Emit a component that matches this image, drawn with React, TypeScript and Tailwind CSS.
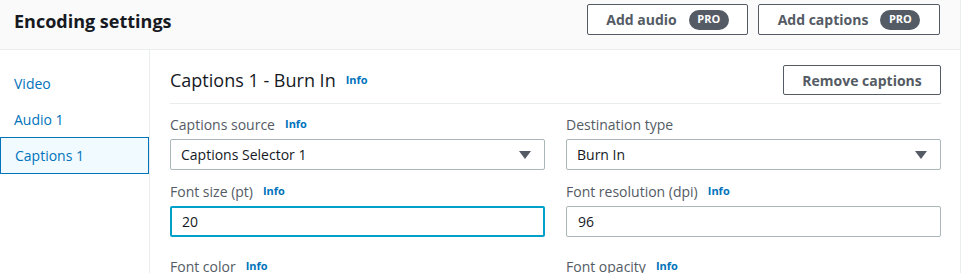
import React from 'react';

const font = { fontFamily: '"Open Sans", "Noto Sans", sans-serif' };

function Info() {
  return <span className="ml-[10px] text-[11px] font-bold text-[#0073bb]">Info</span>;
}

function ProButton({ label, width }: { label: string; width: string }) {
  return (
    <button
      className={`flex h-[31px] ${width} items-center justify-center gap-3 rounded-[2px] border border-[#545b64] bg-white text-[14px] font-bold text-[#545b64]`}
    >
      <span>{label}</span>
      <span className="flex h-5 w-10 items-center justify-center rounded-full bg-[#545b64] text-[11px] font-bold text-white">
        PRO
      </span>
    </button>
  );
}

function Field({
  label,
  info = true,
  children,
}: {
  label: string;
  info?: boolean;
  children?: React.ReactNode;
}) {
  return (
    <div className="flex flex-1 flex-col">
      <div className="flex h-[24px] items-center text-[14px] text-[#545b64]">
        <span>{label}</span>
        {info && <Info />}
      </div>
      {children}
    </div>
  );
}

function Select({ value }: { value: string }) {
  return (
    <div className="mt-[3px] flex h-[31px] items-center justify-between rounded-[2px] border border-[#aab7b8] bg-white pl-[10px] pr-[13px] text-[14px] text-[#16191f]">
      <span>{value}</span>
      <svg width="12" height="8" viewBox="0 0 12 8">
        <path d="M0 0h12L6 8z" fill="#545b64" />
      </svg>
    </div>
  );
}

function Input({ value, focused }: { value: string; focused?: boolean }) {
  return (
    <div
      className={`mt-[3px] flex h-[31px] items-center rounded-[2px] bg-white text-[14px] text-[#16191f] ${
        focused ? 'border-2 border-[#00a1c9] pl-[10px]' : 'border border-[#aab7b8] pl-[11px]'
      }`}
    >
      {value}
    </div>
  );
}

export default function App() {
  return (
    <div className="h-[273px] w-[961px] overflow-hidden border-r border-[#eaeded] bg-white" style={font}>
      <header className="flex h-[50px] items-start justify-between border-b border-[#eaeded] bg-[#fafafa] pl-[14px] pr-[20px]">
        <h1 className="mt-[8px] text-[18px] font-bold text-[#16191f]">Encoding settings</h1>
        <div className="mt-[4px] flex gap-[10px]">
          <ProButton label="Add audio" width="w-[161px]" />
          <ProButton label="Add captions" width="w-[182px]" />
        </div>
      </header>
      <div className="flex">
        <nav className="w-[150px] shrink-0 border-r border-[#eaeded] pt-[15px] text-[14px] text-[#0073bb]">
          <div className="flex h-[36px] items-center pl-[14px]">Video</div>
          <div className="flex h-[36px] items-center pl-[14px]">Audio 1</div>
          <div className="flex h-[37px] w-[149px] items-center border border-[#0073bb] bg-[#f1faff] pl-[14px]">
            Captions 1
          </div>
        </nav>
        <main className="flex-1 pl-[20px] pr-[19px] pt-[15px]">
          <div className="flex h-[39px] items-center justify-between border-b border-[#eaeded] pb-[8px]">
            <div className="flex items-center">
              <span className="text-[18px] text-[#16191f]">Captions 1 - Burn In</span>
              <Info />
            </div>
            <button className="h-[30px] w-[158px] rounded-[2px] border border-[#545b64] bg-white text-[14px] font-bold text-[#545b64]">
              Remove captions
            </button>
          </div>
          <div className="mt-[8px] flex gap-[21px]">
            <Field label="Captions source">
              <Select value="Captions Selector 1" />
            </Field>
            <Field label="Destination type" info={false}>
              <Select value="Burn In" />
            </Field>
          </div>
          <div className="mt-[9px] flex gap-[21px]">
            <Field label="Font size (pt)">
              <Input value="20" focused />
            </Field>
            <Field label="Font resolution (dpi)">
              <Input value="96" />
            </Field>
          </div>
          <div className="mt-[17px] flex gap-[21px]">
            <Field label="Font color" />
            <Field label="Font opacity" />
          </div>
        </main>
      </div>
    </div>
  );
}
